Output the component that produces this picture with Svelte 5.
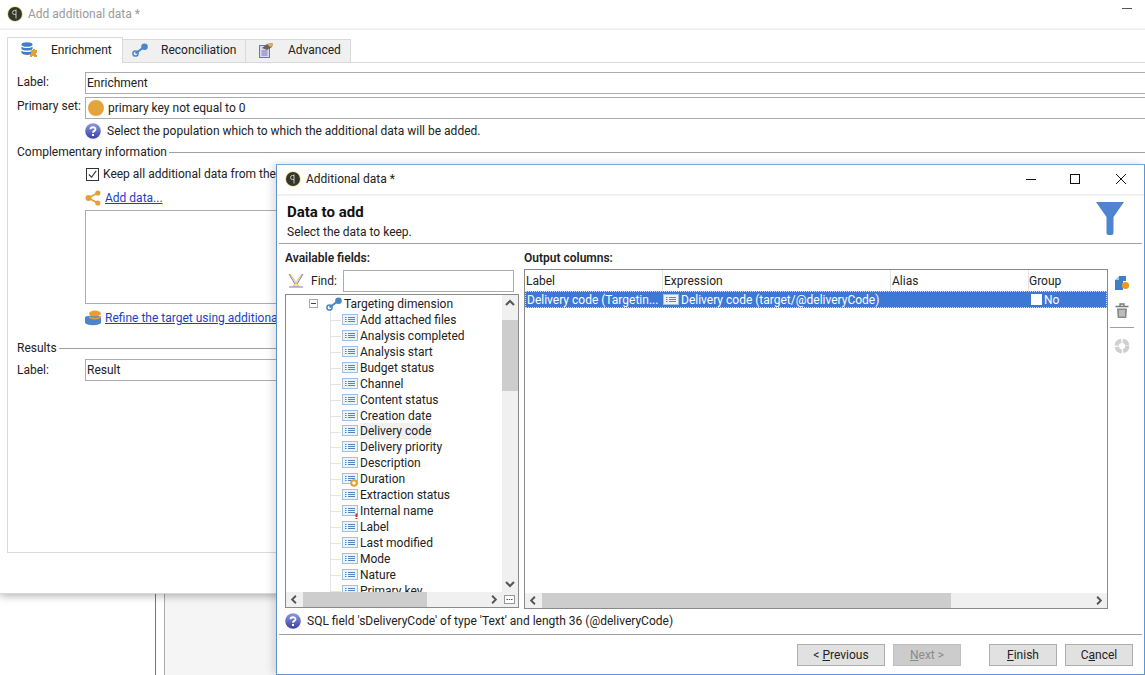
<script>
  const fields = [
    ['Add attached files', ''], ['Analysis completed', ''], ['Analysis start', ''], ['Budget status', ''],
    ['Channel', ''], ['Content status', ''], ['Creation date', ''], ['Delivery code', 'hl'],
    ['Delivery priority', ''], ['Description', ''], ['Duration', 'calc'], ['Extraction status', ''],
    ['Internal name', 'req'], ['Label', ''], ['Last modified', ''], ['Mode', ''], ['Nature', ''], ['Primary key', 'key']
  ];
</script>

{#snippet logo()}
  <svg class="logo" viewBox="0 0 16 16"><circle cx="8" cy="8" r="7.800" fill="#e6e88a"/><circle cx="8" cy="8" r="7" fill="#34352c"/><path d="M9 3.500V12.500M9 4.500H7.500A2 2 0 0 0 7.500 8.500H9" fill="none" stroke="#c9c9b5" stroke-width="1"/></svg>
{/snippet}
{#snippet help()}
  <svg class="ic16" viewBox="0 0 16 16"><defs><linearGradient id="hg" x1="0" y1="0" x2="0" y2="1"><stop offset="0" stop-color="#8d9ae0"/><stop offset="1" stop-color="#3a3fa8"/></linearGradient></defs><circle cx="8" cy="8" r="7.800" fill="url(#hg)"/><path d="M5.500 6.200C5.600 3.600 10.500 3.500 10.500 6.200C10.500 8 8 7.800 8 9.800" fill="none" stroke="#fff" stroke-width="1.900"/><rect x="7" y="11" width="2" height="2" fill="#fff"/></svg>
{/snippet}
{#snippet link16(color)}
  <svg class="ic16" viewBox="0 0 16 16"><path d="M3.500 11.500L12 5" stroke={color} stroke-width="2"/><circle cx="3.500" cy="11.500" r="2.600" fill="none" stroke={color} stroke-width="1.500"/><circle cx="12.500" cy="4.800" r="3.300" fill={color}/></svg>
{/snippet}
{#snippet field(kind)}
  <svg class="ic16" viewBox="0 0 16 16">
    <rect x="0.500" y="2.500" width="15" height="10" fill="#eaf2fa" stroke="#a3c0de"/>
    <path d="M3 5.500H4.500M6 5.500H13M3 7.500H4.500M6 7.500H13M3 9.500H4.500M6 9.500H13" stroke="#4d87c4" stroke-width="1"/>
    {#if kind === 'calc'}<circle cx="12" cy="12" r="2.800" fill="#fff" stroke="#e0a030" stroke-width="2"/>{/if}
    {#if kind === 'req'}<path d="M14.500 10.500v3.500M14.500 15v1.500" stroke="#d03020" stroke-width="2"/>{/if}
    {#if kind === 'key'}<path d="M11 12l2 2 3-4" stroke="#d03020" stroke-width="1.500" fill="none"/>{/if}
  </svg>
{/snippet}

<div class="desk">
  <div class="back-lines"></div>

  <section class="win back">
    <header class="bar">
      {@render logo()}
      <span class="muted">Add additional data *</span>
      <i class="min"></i>
    </header>
    <div class="strip"></div>
    <div class="tabs">
      <div class="tab active">
        <svg class="tabic" viewBox="0 0 16 16"><ellipse cx="6" cy="2.500" rx="5.500" ry="2.300" fill="#3f7fc4"/><path d="M.5 4.500c2 2 9 2 11 0V7c-2 2-9 2-11 0zM.5 8.500c2 2 9 2 11 0V11c-2 2.500-9 2.500-11 0z" fill="#3f7fc4"/><path d="M10 8h2V7h2v1h2v3h-1v2h1v2h-3v-1h-2v1h-2v-3h1z" fill="#e5a033"/></svg>
        <span>Enrichment</span>
      </div>
      <div class="tab">
        <span class="tabic">{@render link16('#4a86c8')}</span>
        <span>Reconciliation</span>
      </div>
      <div class="tab">
        <svg class="tabic" viewBox="0 0 16 16"><rect x="1.500" y="3.500" width="10" height="12" fill="#d8d8f4" stroke="#7272b8"/><path d="M3.500 9h6M3.500 11h6M3.500 13h6" stroke="#7272b8"/><path d="M4 6l5-4 6-1-1 4-5 3z" fill="#6d6350"/><path d="M9 2l6-1v3l-3 1z" fill="#d8b070"/></svg>
        <span>Advanced</span>
      </div>
    </div>
    <div class="panel">
      <div class="row">
        <label class="lbl" for="l1">Label:</label>
        <input id="l1" class="inp" value="Enrichment" readonly />
      </div>
      <div class="row r2">
        <span class="lbl up">Primary set:</span>
        <div class="inp set"><i class="dot"></i><span>primary key not equal to 0</span></div>
      </div>
      <div class="note">{@render help()}<span>Select the population which to which the additional data will be added.</span></div>
      <div class="legend l-comp"><span>Complementary information</span><i></i></div>
      <div class="check"><i class="cb"><svg viewBox="0 0 12 12"><path d="M2 6l3 3 5-7" fill="none" stroke="#333" stroke-width="1.200"/></svg></i><span>Keep all additional data from the</span></div>
      <div class="linkrow">
        <svg class="ic16" viewBox="0 0 16 16"><path d="M3.500 8L12.500 3M3.500 8L12.500 13" stroke="#e5a033" stroke-width="1.700"/><circle cx="3.500" cy="8" r="3" fill="#e5a033"/><circle cx="12.800" cy="3" r="2.600" fill="#e5a033"/><circle cx="12.800" cy="13" r="2.600" fill="#e5a033"/></svg>
        <a href="#a">Add data...</a>
      </div>
      <div class="area"></div>
      <div class="linkrow l2">
        <svg class="ic16" viewBox="0 0 16 16"><path d="M0 7c3-2 13-2 16 0v6c-3 3-13 3-16 0z" fill="#4a86c8"/><ellipse cx="10" cy="3.500" rx="6" ry="3" fill="#e5a033"/><path d="M4 5.500c2 3 10 3 12 0v2c-2 2.500-10 2.500-12 0z" fill="#e5a033"/></svg>
        <a href="#b">Refine the target using additional</a>
      </div>
      <div class="legend l-res"><span>Results</span><i></i></div>
      <div class="row r3">
        <label class="lbl" for="l2">Label:</label>
        <input id="l2" class="inp" value="Result" readonly />
      </div>
    </div>
  </section>

  <section class="win modal">
    <header class="bar mbar">
      {@render logo()}
      <span class="ttl">Additional data *</span>
      <div class="ctl">
        <svg viewBox="0 0 12 12"><path d="M1 6.500H11" stroke="#111"/></svg>
        <svg viewBox="0 0 12 12"><rect x="1.500" y="1.500" width="9" height="9" fill="none" stroke="#111"/></svg>
        <svg viewBox="0 0 12 12"><path d="M1 1L11 11M11 1L1 11" stroke="#111"/></svg>
      </div>
    </header>
    <div class="strip"></div>
    <div class="head">
      <div>
        <h1>Data to add</h1>
        <p>Select the data to keep.</p>
      </div>
      <svg class="funnel" viewBox="0 0 28 33"><path d="M0 0H28L17.500 15V31a2 2 0 0 1-2 2H12.500a2 2 0 0 1-2-2V15z" fill="#4f85d0"/></svg>
    </div>
    <div class="hr"></div>

    <div class="main">
      <div class="left">
        <h2>Available fields:</h2>
        <div class="find">
          <svg class="ic16" viewBox="0 0 16 16"><path d="M2 1L8 9.500 14 1 8 9.500 5 13H11L8 9.500z" fill="#f3e4a0" stroke="#e0c860" stroke-width="0.800"/><path d="M1 1L7 11M15 1L9 11M1 14H15" stroke="#7c74b8" stroke-width="1" fill="none"/></svg>
          <span>Find:</span>
          <input class="inp" readonly />
        </div>
        <div class="tree">
          <div class="tree-body">
            <div class="rows">
              <div class="trow root">
                <svg class="exp" viewBox="0 0 9 9"><rect x="0.500" y="0.500" width="8" height="8" fill="#fff" stroke="#aaa"/><path d="M2 4.500H7" stroke="#444"/></svg>
                {@render link16('#4a86c8')}
                <span>Targeting dimension</span>
              </div>
              {#each fields as [name, kind]}
                <div class="trow leaf">
                  <i class="stub"></i>
                  {@render field(kind)}
                  <span class:hl={kind === 'hl'}>{name}</span>
                </div>
              {/each}
            </div>
            <div class="vsb">
              <svg viewBox="0 0 16 16"><path d="M4 10l4-4 4 4" fill="none" stroke="#555" stroke-width="2"/></svg>
              <div class="vtrack"><i></i></div>
              <svg viewBox="0 0 16 16"><path d="M4 6l4 4 4-4" fill="none" stroke="#555" stroke-width="2"/></svg>
            </div>
          </div>
          <div class="hsb">
            <svg viewBox="0 0 16 16"><path d="M10 4l-4 4 4 4" fill="none" stroke="#555" stroke-width="2"/></svg>
            <div class="htrack t1"><i></i></div>
            <svg viewBox="0 0 16 16"><path d="M6 4l4 4-4 4" fill="none" stroke="#555" stroke-width="2"/></svg>
            <svg viewBox="0 0 16 15"><rect x="2.500" y="3.500" width="10" height="8" fill="#fff" stroke="#999"/><path d="M4.500 7.500H6M6.800 7.500H8.200M9 7.500H10.500" stroke="#555"/></svg>
          </div>
        </div>
      </div>

      <div class="right">
        <h2>Output columns:</h2>
        <div class="grid">
          <div class="ghead">
            <span class="c1">Label</span><span class="c2">Expression</span><span class="c3">Alias</span><span class="c4">Group</span>
          </div>
          <div class="gsel">
            <span class="c1">Delivery code (Targetin...</span>
            <span class="c2 ex">
              <svg class="ic16" viewBox="0 0 16 16"><rect x="0.500" y="2.500" width="15" height="10" fill="#eaf2fa" stroke="#a3c0de"/><path d="M3 5.500H4.500M6 5.500H13M3 7.500H4.500M6 7.500H13M3 9.500H4.500M6 9.500H13" stroke="#4d87c4"/></svg>
              Delivery code (target/@deliveryCode)
            </span>
            <span class="c3"></span>
            <span class="c4 ex"><i class="wcb"></i>No</span>
          </div>
          <div class="gfill"></div>
          <div class="hsb">
            <svg viewBox="0 0 16 16"><path d="M10 4l-4 4 4 4" fill="none" stroke="#555" stroke-width="2"/></svg>
            <div class="htrack t2"><i></i></div>
            <svg viewBox="0 0 16 16"><path d="M6 4l4 4-4 4" fill="none" stroke="#555" stroke-width="2"/></svg>
          </div>
        </div>
      </div>

      <div class="tools">
        <svg class="ic16" viewBox="0 0 16 16"><path d="M1 5h4V1h7v5H9v9H1z" fill="#3f7fc4"/><path d="M5 1L1 5h4z" fill="#a8c8ea"/><circle cx="11.500" cy="10.500" r="3.600" fill="#e89a20"/></svg>
        <svg class="ic16" viewBox="0 0 16 16"><path d="M1.500 3.500H14.500M6 3V1H10V3" fill="none" stroke="#777" stroke-width="1.300"/><path d="M3 5.500H13L12.300 15H3.700z" fill="#8a8a8a"/><path d="M6 7V13.500M8 7V13.500M10 7V13.500" stroke="#eee"/></svg>
        <i class="tsep"></i>
        <svg class="ic16" viewBox="0 0 16 16"><circle cx="8" cy="8" r="5.400" fill="none" stroke="#cfcfcf" stroke-width="4" stroke-dasharray="7 1.500"/></svg>
      </div>
    </div>

    <div class="status">{@render help()}<span>SQL field 'sDeliveryCode' of type 'Text' and length 36 (@deliveryCode)</span></div>
    <div class="hr h2"></div>
    <div class="btns">
      <button class="b88">&lt; <u>P</u>revious</button>
      <button class="b68 off" disabled><u>N</u>ext &gt;</button>
      <button class="b68 sp"><u>F</u>inish</button>
      <button class="b68">C<u>a</u>ncel</button>
    </div>
  </section>
</div>

<style>
  :global(body) { margin: 0; background: #fff; }
  .desk { position: relative; width: 1145px; height: 675px; overflow: hidden; background: #fff; font: 12px/16px Roboto, "Noto Sans", sans-serif; color: #222; }
  .back-lines { position: absolute; left: 155px; top: 590px; bottom: 0; right: 0; border-left: 1px solid #777; }
  .back-lines::after { content: ""; position: absolute; left: 8px; top: 0; bottom: 0; right: 0; border-left: 1px solid #aaa; background: #f5f5f5; }
  .win { position: absolute; background: #fff; box-sizing: border-box; }
  .back { left: 0; top: 0; width: 1165px; height: 594px; border-bottom: 1px solid #d8d8d8; box-shadow: 0 2px 8px rgba(0,0,0,.3); }
  .modal { left: 276px; top: 164px; width: 869px; height: 511px; border: 1.500px solid #5f93d3; border-top-color: #7da8dc; box-shadow: -3px 0 8px rgba(0,0,0,.14); }
  .bar { height: 28px; display: flex; align-items: center; padding-left: 7px; gap: 5px; }
  .logo { width: 16px; height: 16px; flex: none; }
  .muted { color: #9a9a9a; }
  .min { position: absolute; left: 1122px; top: 8px; width: 10px; height: 1px; background: #555; }
  .strip { height: 2px; background: #f0f0f0; }
  .tabs { display: flex; align-items: flex-end; height: 32px; padding-left: 7px; box-sizing: border-box; }
  .tab { height: 23px; display: flex; align-items: center; background: #f0f0f0; border: 1px solid #d9d9d9; border-bottom: 0; border-left: 0; box-sizing: border-box; padding: 0 15px 2px 11px; gap: 12px; }
  .tab.active { height: 26px; width: 116px; background: #fff; border-left: 1px solid #d9d9d9; padding: 0 0 1px 13px; margin-bottom: -1px; position: relative; z-index: 1; gap: 14px; }
  .tab:nth-child(2) { width: 123px; padding-left: 9px; gap: 13px; }
  .tab:nth-child(3) { width: 105px; padding-left: 12px; gap: 14px; }
  .tabic { width: 16px; height: 16px; flex: none; display: block; }
  .ic16 { width: 16px; height: 16px; flex: none; display: block; }
  .panel { margin-left: 7px; width: 1150px; height: 491px; border: 1px solid #d9d9d9; box-sizing: border-box; padding: 9px 0 0 9px; }
  .row { display: flex; align-items: flex-start; }
  .r2 { margin-top: 3px; }
  .r3 { margin-top: 3px; }
  .lbl { width: 68px; flex: none; line-height: 20px; }
  .r3 .lbl { line-height: 22px; }
  .up { line-height: 19px; }
  .inp { font: inherit; color: inherit; flex: 1; min-width: 0; box-sizing: border-box; height: 22px; padding: 0 1px 1px; border: 1px solid #acacac; background: #fff; outline: 0; }
  .set { display: flex; align-items: center; gap: 4px; padding-left: 2px; }
  .dot { width: 16px; height: 16px; border-radius: 50%; background: #e3a53b; }
  .note { display: flex; align-items: center; gap: 6px; margin: 3px 0 0 68px; height: 18px; }
  .legend { display: flex; align-items: center; gap: 2px; height: 16px; }
  .legend i { flex: 1; height: 1px; background: #a0a0a0; }
  .l-comp { margin-top: 4px; }
  .check { display: flex; align-items: center; gap: 4px; margin: 5px 0 0 69px; height: 18px; }
  .cb { width: 13px; height: 13px; border: 1px solid #333; box-sizing: border-box; display: block; }
  .cb svg { display: block; width: 11px; height: 11px; }
  .linkrow { display: flex; align-items: center; gap: 4px; margin: 6px 0 0 68px; height: 18px; }
  .linkrow a { color: #1c3fc4; text-decoration: underline; white-space: nowrap; }
  .area { margin: 3px 0 0 68px; height: 94px; border: 1px solid #acacac; box-sizing: border-box; }
  .l2 { margin-top: 5px; }
  .l-res { margin-top: 13px; }

  .mbar { height: 29px; padding-left: 8px; gap: 5px; padding-bottom: 2px; box-sizing: border-box; }
  .ttl { color: #222; }
  .ctl { margin-left: auto; display: flex; gap: 33px; padding-right: 17px; }
  .ctl svg { width: 12px; height: 12px; display: block; }
  .ctl svg:nth-child(2) { margin-left: -1px; margin-right: 1px; }
  .head { height: 47px; padding: 6px 20px 0 10px; display: flex; justify-content: space-between; box-sizing: border-box; }
  h1 { margin: 0; font: 700 15px/20px Roboto, "Noto Sans", sans-serif; color: #111; }
  p { margin: 2px 0 0; }
  .funnel { width: 28px; height: 33px; }
  .hr { height: 1px; background: #a0a0a0; margin: 0 2px 0 2px; }
  .main { display: flex; padding: 6px 0 0 8px; height: 365px; box-sizing: border-box; }
  h2 { margin: 0; font: 600 12px/16px Roboto, "Noto Sans", sans-serif; color: #222; }
  .left { width: 234px; flex: none; }
  .right { width: 584px; margin-left: 5px; flex: none; }
  .find { display: flex; align-items: center; height: 23px; margin-top: 3px; padding-right: 5px; padding-left: 3px; }
  .find span { margin: 0 6px 0 7px; }
  .find .inp { height: 22px; }
  .tree { margin-top: 2px; height: 314px; border: 1px solid #8a8a8a; box-sizing: border-box; display: flex; flex-direction: column; }
  .tree-body { flex: 1; min-height: 0; display: flex; }
  .rows { flex: 1; min-width: 0; overflow: hidden; padding-top: 1px; position: relative; }
  .rows::before { content: ""; position: absolute; left: 44px; top: 14px; bottom: 0; border-left: 1px solid #e4e4e4; }
  .trow { height: 15.950px; display: flex; align-items: center; white-space: nowrap; position: relative; }
  .root { padding-left: 23px; gap: 2px; }
  .exp { width: 9px; height: 9px; margin-right: 6px; flex: none; }
  .leaf { padding-left: 56px; gap: 2px; }
  .stub { position: absolute; left: 45px; top: 8px; width: 10px; height: 1px; background: #e4e4e4; }
  .hl { background: #f0f0f0; padding-right: 1px; }
  .vsb { width: 16px; flex: none; background: #f0f0f0; display: flex; flex-direction: column; }
  .vsb svg { width: 16px; height: 16px; flex: none; display: block; }
  .vtrack { flex: 1; padding-top: 9px; }
  .vtrack i { display: block; height: 71px; background: #cdcdcd; }
  .hsb { height: 15px; flex: none; background: #f0f0f0; display: flex; }
  .hsb svg { width: 16px; height: 15px; flex: none; display: block; }
  .htrack { flex: 1; padding-left: 1px; }
  .htrack i { display: block; height: 15px; background: #cdcdcd; }
  .t1 i { width: 124px; }
  .t2 i { width: 409px; }
  .grid { margin-top: 3px; height: 340px; border: 1px solid #8a8a8a; box-sizing: border-box; display: flex; flex-direction: column; }
  .ghead, .gsel { display: grid; grid-template-columns: 138px 228px 138px 1fr; align-items: center; flex: none; }
  .ghead { height: 21px; }
  .ghead span { padding-left: 1px; height: 21px; line-height: 23px; border-right: 1px solid #e4e4e4; box-sizing: border-box; }
  .ghead .c4 { padding-left: 0; }
  .ghead span:last-child { border-right: 0; }
  .gsel { height: 17px; background: #3d78d4; color: #fff; outline: 1px dotted #cfe0f5; outline-offset: -1px; white-space: nowrap; }
  .gsel .c1 { padding-left: 2px; overflow: hidden; }
  .ex { display: flex; align-items: center; gap: 2px; padding-left: 1px; }
  .c2.ex { padding-left: 0; }
  .c4.ex { padding-left: 2px; gap: 2px; }
  .wcb { width: 11px; height: 11px; background: #fff; display: block; }
  .gfill { flex: 1; }
  .tools { width: 16px; margin-left: 6px; padding-top: 25px; display: flex; flex-direction: column; align-items: center; }
  .tools svg:nth-child(2) { margin-top: 12px; }
  .tsep { display: block; width: 24px; height: 1px; background: #a0a0a0; margin: 8px 0 10px; flex: none; }
  .status { display: flex; align-items: center; gap: 6px; padding-left: 8px; height: 26px; margin-top: -1px; }
  .h2 { margin-top: 0; }
  .btns { display: flex; padding: 9px 0 0 520px; gap: 8px; }
  button { font: inherit; color: #222; height: 22px; padding: 0; background: #e1e1e1; border: 1px solid #adadad; border-radius: 0; box-sizing: border-box; }
  .b88 { width: 88px; }
  .b68 { width: 68px; }
  .sp { margin-left: 20px; }
  .off { background: #ccc; color: #8a8a8a; border-color: #bfbfbf; }
</style>
